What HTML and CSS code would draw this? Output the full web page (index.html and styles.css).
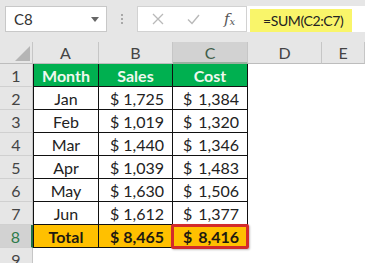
FILE: index.html
```html
<!DOCTYPE html>
<html>
<head>
<meta charset="utf-8">
<link rel="stylesheet" href="styles.css">
</head>
<body>
<div class="app">
  <div class="toolbar">
    <div class="namebox"><span>C8</span><span class="caret"></span></div>
    <div class="dots"><i></i><i></i><i></i></div>
    <div class="fxbox">
      <svg class="ico" width="12" height="12" viewBox="0 0 12 12"><path d="M1 1L11 11M11 1L1 11" stroke="#b9b9b9" stroke-width="1.3" fill="none"/></svg>
      <svg class="ico" width="13" height="11" viewBox="0 0 13 11"><path d="M1 5.5L5 9.5L12 1" stroke="#b9b9b9" stroke-width="1.4" fill="none"/></svg>
      <span class="fx">f<sub>x</sub></span>
    </div>
    <div class="formula"><div class="hl">=SUM(C2:C7)</div></div>
  </div>
  <div class="sheet">
    <div class="corner"><span class="tri"></span></div>
    <div class="ch">A</div>
    <div class="ch">B</div>
    <div class="ch sel">C</div>
    <div class="ch">D</div>
    <div class="ch">E</div>

    <div class="rh">1</div>
    <div class="c a hd">Month</div>
    <div class="c hd">Sales</div>
    <div class="c hd">Cost</div>
    <div class="e"></div><div class="e"></div>

    <div class="rh">2</div>
    <div class="c a">Jan</div>
    <div class="c m"><span>$</span><span>1,725</span></div>
    <div class="c m mc"><span>$</span><span>1,384</span></div>
    <div class="e"></div><div class="e"></div>

    <div class="rh">3</div>
    <div class="c a">Feb</div>
    <div class="c m"><span>$</span><span>1,019</span></div>
    <div class="c m mc"><span>$</span><span>1,320</span></div>
    <div class="e"></div><div class="e"></div>

    <div class="rh">4</div>
    <div class="c a">Mar</div>
    <div class="c m"><span>$</span><span>1,440</span></div>
    <div class="c m mc"><span>$</span><span>1,346</span></div>
    <div class="e"></div><div class="e"></div>

    <div class="rh">5</div>
    <div class="c a">Apr</div>
    <div class="c m"><span>$</span><span>1,039</span></div>
    <div class="c m mc"><span>$</span><span>1,483</span></div>
    <div class="e"></div><div class="e"></div>

    <div class="rh">6</div>
    <div class="c a">May</div>
    <div class="c m"><span>$</span><span>1,630</span></div>
    <div class="c m mc"><span>$</span><span>1,506</span></div>
    <div class="e"></div><div class="e"></div>

    <div class="rh">7</div>
    <div class="c a">Jun</div>
    <div class="c m"><span>$</span><span>1,612</span></div>
    <div class="c m mc"><span>$</span><span>1,377</span></div>
    <div class="e"></div><div class="e"></div>

    <div class="rh rsel">8</div>
    <div class="c a tot">Total</div>
    <div class="c m tot"><span>$</span><span>8,465</span></div>
    <div class="c m mc tot active"><span>$</span><span>8,416</span></div>
    <div class="e"></div><div class="e"></div>

    <div class="rh last">9</div>
    <div class="e"></div><div class="e"></div><div class="e"></div><div class="e"></div><div class="e"></div>
  </div>
</div>
</body>
</html>
```

FILE: styles.css
```css
* { box-sizing: border-box; }
html, body { margin: 0; padding: 0; }
body {
  width: 365px;
  height: 263px;
  overflow: hidden;
  background: #e6e6e6;
  font-family: Lato, "Noto Sans", sans-serif;
  color: #222;
}
.app { width: 365px; height: 263px; overflow: hidden; }

.toolbar {
  height: 42px;
  display: flex;
  align-items: flex-start;
  padding: 6px 0 0 5px;
  background: #e6e6e6;
}
.namebox {
  width: 102px;
  height: 26px;
  background: #fff;
  border: 1px solid #c8c8c8;
  display: flex;
  align-items: center;
  justify-content: space-between;
  padding: 0 7px 0 8px;
  font-size: 15px;
  color: #333;
}
.caret {
  width: 0; height: 0;
  border-left: 4px solid transparent;
  border-right: 4px solid transparent;
  border-top: 5px solid #666;
}
.dots {
  width: 30px;
  height: 26px;
  display: flex;
  flex-direction: column;
  align-items: center;
  justify-content: center;
  gap: 2px;
}
.dots i { display: block; width: 2px; height: 2px; background: #a8a8a8; }
.fxbox {
  width: 110px;
  height: 26px;
  background: #fff;
  border: 1px solid #d2d2d2;
  display: flex;
  align-items: center;
  padding: 0 0 0 14px;
}
.fxbox .ico { display: block; }
.fxbox .ico:nth-child(2) { margin-left: 23px; }
.fx {
  margin-left: 24px;
  font-family: "DejaVu Serif", "Liberation Serif", serif;
  font-style: italic;
  font-size: 15px;
  color: #555;
}
.fx sub { font-size: 10px; vertical-align: -1px; }
.formula {
  flex: 1;
  height: 26px;
  background: #fff;
  padding: 3px 0 0 3px;
}
.hl {
  width: 102px;
  height: 23px;
  background: #f9f56a;
  display: flex;
  align-items: center;
  padding-left: 13px;
  font-size: 14px;
  letter-spacing: -0.4px;
  color: #222;
  white-space: nowrap;
}

.sheet {
  display: grid;
  grid-template-columns: 33px 66px 74px 75px 74px 43px;
  grid-template-rows: 22px repeat(9, 23px);
  background: #fff;
}
.corner {
  background: #e6e6e6;
  border-right: 1px solid #c6c6c6;
  border-bottom: 1px solid #bdbdbd;
  display: flex;
  align-items: flex-end;
  justify-content: flex-end;
  padding: 0 2px 2px 0;
}
.tri {
  width: 0; height: 0;
  border-left: 15px solid transparent;
  border-bottom: 15px solid #b5b5b5;
}
.ch {
  background: #e6e6e6;
  border-right: 1px solid #c6c6c6;
  border-bottom: 1px solid #bdbdbd;
  display: flex;
  align-items: center;
  justify-content: center;
  font-size: 16px;
  color: #444;
}
.ch.sel {
  background: #d2d2d2;
  color: #3e5e4a;
  border-bottom: 2px solid #9ab09f;
}
.rh {
  background: #e6e6e6;
  border-right: 1px solid #c6c6c6;
  border-bottom: 1px solid #d0d0d0;
  display: flex;
  align-items: center;
  justify-content: center;
  font-size: 16px;
  color: #444;
}
.rh.last { align-items: flex-start; padding-top: 2px; }
.rh.rsel {
  background: #d2d2d2;
  color: #2d7a4a;
  border-right: 2px solid #217346;
}
.e { background: #fff; }
.c {
  background: #fff;
  border-right: 1px solid #111;
  border-bottom: 1px solid #111;
  display: flex;
  align-items: center;
  justify-content: center;
  font-size: 16px;
  color: #222;
  white-space: nowrap;
}
.c.a { border-left: 1px solid #111; }
.c.hd {
  background: #00b050;
  color: #eef8ee;
  font-weight: bold;
}
.c.m {
  justify-content: space-between;
  padding: 0 8px 0 11px;
}
.c.m.mc { padding-left: 10px; }
.c.tot {
  background: #ffc000;
  font-weight: bold;
  color: #1e1a10;
}
.c.active { position: relative; }
.c.active::after {
  content: "";
  position: absolute;
  left: -2px; top: -1px; right: -2px; bottom: -2px;
  border: 3px solid #d32b2b;
  border-radius: 2px;
  box-shadow: 1px 1px 2px rgba(0,0,0,0.25);
}
```
